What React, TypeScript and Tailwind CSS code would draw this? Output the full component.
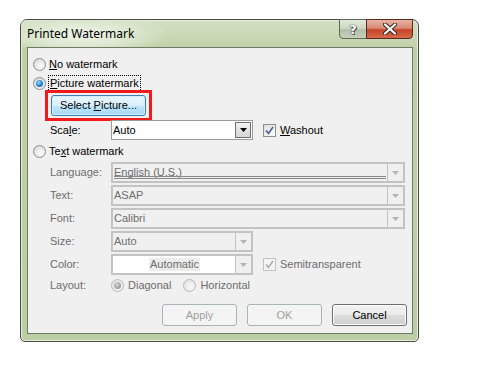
import * as React from "react";

// Windows 7 style "Printed Watermark" dialog

function Radio({ checked = false, disabled = false }: { checked?: boolean; disabled?: boolean }) {
    return (
        <span
            className={
                "relative inline-flex size-[13px] shrink-0 items-center justify-center rounded-full border " +
                (disabled
                    ? "border-[#b8b8b8] bg-[radial-gradient(circle_at_60%_65%,#f8f8f8_0%,#e6e6e6_70%,#dcdcdc_100%)]"
                    : "border-[#8e8f8f] bg-[radial-gradient(circle_at_60%_65%,#ffffff_0%,#e2e2e2_60%,#c9c9c9_100%)]")
            }
        >
            {checked && (
                <span
                    className={
                        "size-[7px] rounded-full " +
                        (disabled
                            ? "bg-[radial-gradient(circle_at_40%_35%,#d6d6d6_0%,#9c9c9c_70%,#8a8a8a_100%)]"
                            : "bg-[radial-gradient(circle_at_40%_35%,#8fd7ff_0%,#1f7ad0_60%,#0d4a96_100%)]")
                    }
                />
            )}
        </span>
    );
}

function Check({ disabled = false }: { disabled?: boolean }) {
    return (
        <span
            className={
                "inline-flex size-[13px] shrink-0 items-center justify-center border " +
                (disabled ? "border-[#c2c2c2] bg-[#f4f4f4]" : "border-[#8f8f8f] bg-gradient-to-br from-[#dcdcdc] to-[#ffffff]")
            }
        >
            <svg width="9" height="9" viewBox="0 0 9 9">
                <path
                    d="M1 4.5 L3.5 7.5 L8 1"
                    fill="none"
                    stroke={disabled ? "#b0b0b0" : "#4b5c96"}
                    strokeWidth="1.6"
                />
            </svg>
        </span>
    );
}

function Arrow({ disabled = false }: { disabled?: boolean }) {
    return (
        <svg width="7" height="4" viewBox="0 0 7 4">
            <path d="M0 0 H7 L3.5 4 Z" fill={disabled ? "#b4b4b4" : "#000"} />
        </svg>
    );
}

function Combo({
    value,
    width,
    disabled = false,
    white = false,
    center = false,
    underline = false,
}: {
    value: string;
    width: string;
    disabled?: boolean;
    white?: boolean;
    center?: boolean;
    underline?: boolean;
}) {
    return (
        <div
            className={
                "relative flex h-full " +
                width +
                " " +
                (disabled ? "border-2 border-[#c3c3c3] " : "border border-[#9c9c9c] ") +
                (white || !disabled ? "bg-white" : "bg-[#f0f0f0]")
            }
        >
            <div
                className={
                    "flex flex-1 items-center pl-[1px] " +
                    (center ? "justify-center " : "") +
                    (disabled ? "text-[#6d6d6d]" : "text-black")
                }
            >
                <span className={center ? "bg-[#ececec] px-[1px]" : ""}>{value}</span>
            </div>
            {underline && (
                <div className="absolute bottom-[2px] left-[1px] right-[17px] flex flex-col gap-[1px]">
                    <div className="h-px bg-[#8a8a8a]" />
                    <div className="h-px bg-[#8a8a8a]" />
                </div>
            )}
            <div
                className={
                    "flex w-[16px] items-center justify-center border-l " +
                    (disabled
                        ? "border-[#c3c3c3] bg-[#f0f0f0]"
                        : "m-[1px] ml-0 border border-[#707070] bg-gradient-to-b from-[#f2f2f2] to-[#d5d5d5]")
                }
            >
                <Arrow disabled={disabled} />
            </div>
        </div>
    );
}

function Label({ children, disabled = false }: { children: React.ReactNode; disabled?: boolean }) {
    return <span className={"w-[61px] shrink-0 " + (disabled ? "text-[#6d6d6d]" : "text-black")}>{children}</span>;
}

function PushButton({ children, disabled = false }: { children: React.ReactNode; disabled?: boolean }) {
    return (
        <button
            className={
                "flex h-[22px] w-[75px] items-center justify-center rounded-[3px] border " +
                (disabled
                    ? "border-[#adb2b5] bg-[#f4f4f4] text-[#a0a0a0]"
                    : "border-[#707070] bg-[linear-gradient(#f2f2f2_0%,#ebebeb_50%,#dddddd_51%,#cfcfcf_100%)] text-black shadow-[inset_0_0_0_1px_#fcfcfc]")
            }
        >
            {children}
        </button>
    );
}

export default function App() {
    return (
        <div className="h-[374px] w-[486px] bg-white pl-[20px] pt-[19px] font-['Liberation_Sans',Arial,sans-serif] text-[11px]">
            <div className="flex h-[323px] w-[399px] flex-col rounded-t-[7px] rounded-b-[5px] border border-[#4a4a4a] bg-[linear-gradient(to_bottom,#d4e0c4_0px,#bfd0a6_30px,#bccea3_100%)] shadow-[inset_0_0_0_1px_#e6eedc]">
                {/* Title bar */}
                <div className="flex h-[27px] shrink-0 items-start justify-between bg-[radial-gradient(ellipse_90px_22px_at_60px_14px,#eef3e8_0%,#dbe6cd_60%,transparent_100%)]">
                    <span className="ml-[6px] mt-[6px] font-['Noto_Sans','Open_Sans',sans-serif] text-[12px] leading-[16px] text-black">
                        Printed Watermark
                    </span>
                    <div className="-mt-px mr-[5px] flex">
                        <div className="flex h-[20px] w-[28px] items-center justify-center rounded-bl-[4px] border border-[#5e6a56] bg-[linear-gradient(#e3e9dc_0%,#cfd8c6_45%,#b3c0a8_55%,#c5d2bb_100%)]">
                            <span className="font-['DejaVu_Sans',sans-serif] text-[13px] font-bold leading-none text-white [text-shadow:0_0_1px_#333,0_0_1px_#333,1px_1px_0_#555]">
                                ?
                            </span>
                        </div>
                        <div className="-ml-px flex h-[20px] w-[47px] items-center justify-center rounded-br-[4px] border border-[#5a2a20] bg-[linear-gradient(#e8b3a4_0%,#d88b74_45%,#c5432a_55%,#d66a48_100%)]">
                            <svg width="14" height="12" viewBox="0 0 14 12">
                                <path d="M2 1.5 L12 10.5 M12 1.5 L2 10.5" stroke="#3a2b28" strokeWidth="4.2" strokeLinecap="round" />
                                <path d="M2 1.5 L12 10.5 M12 1.5 L2 10.5" stroke="#ffffff" strokeWidth="2.2" strokeLinecap="round" />
                            </svg>
                        </div>
                    </div>
                </div>

                {/* Client area */}
                <div className="mb-[7px] ml-[6px] mr-[5px] flex flex-1 flex-col border border-[#6f7b66] bg-[#f0f0f0] pl-[5px] pt-[7px] leading-[13px]">
                    <div className="flex h-[18px] items-center gap-[3px]">
                        <Radio />
                        <span>
                            <u>N</u>o watermark
                        </span>
                    </div>
                    <div className="mt-px flex h-[18px] items-center gap-[2px]">
                        <Radio checked />
                        <span className="border border-dotted border-black px-px py-[1px]">
                            <u>P</u>icture watermark
                        </span>
                    </div>
                    <div className="flex h-[26px] items-center pl-[18px]">
                        <div className="relative">
                            <div className="pointer-events-none absolute -inset-x-[6px] -inset-y-[5px] border-[3px] border-[#f21b1b]" />
                            <div className="flex h-[21px] w-[95px] items-center justify-center rounded-[3px] border border-[#3c7fb1] bg-[linear-gradient(#eaf6fd_0%,#d9f0fc_50%,#bee6fd_51%,#a7d9f5_100%)] text-black shadow-[inset_0_0_0_1px_#d4eefb]">
                                <span>
                                    Select <u>P</u>icture...
                                </span>
                            </div>
                        </div>
                    </div>
                    <div className="mt-[2px] flex h-[20px] items-center pl-[17px]">
                        <Label>
                            Sca<u>l</u>e:
                        </Label>
                        <Combo value="Auto" width="w-[142px]" />
                        <div className="ml-[10px] flex items-center gap-[4px]">
                            <Check />
                            <span>
                                <u>W</u>ashout
                            </span>
                        </div>
                    </div>
                    <div className="mt-[2px] flex h-[18px] items-center gap-[3px]">
                        <Radio />
                        <span>
                            Te<u>x</u>t watermark
                        </span>
                    </div>
                    <div className="mt-[2px] flex h-[21px] items-center pl-[17px]">
                        <Label disabled>Language:</Label>
                        <Combo value="English (U.S.)" width="w-[294px]" disabled underline />
                    </div>
                    <div className="mt-[2px] flex h-[21px] items-center pl-[17px]">
                        <Label disabled>Text:</Label>
                        <Combo value="ASAP" width="w-[294px]" disabled />
                    </div>
                    <div className="mt-[2px] flex h-[21px] items-center pl-[17px]">
                        <Label disabled>Font:</Label>
                        <Combo value="Calibri" width="w-[294px]" disabled />
                    </div>
                    <div className="mt-[2px] flex h-[21px] items-center pl-[17px]">
                        <Label disabled>Size:</Label>
                        <Combo value="Auto" width="w-[142px]" disabled />
                    </div>
                    <div className="mt-[2px] flex h-[21px] items-center pl-[17px]">
                        <Label disabled>Color:</Label>
                        <Combo value="Automatic" width="w-[142px]" disabled white center />
                        <div className="ml-[10px] flex items-center gap-[4px] text-[#6d6d6d]">
                            <Check disabled />
                            <span>Semitransparent</span>
                        </div>
                    </div>
                    <div className="mt-[2px] flex h-[16px] items-center pl-[17px] text-[#6d6d6d]">
                        <Label disabled>Layout:</Label>
                        <div className="flex items-center gap-[4px]">
                            <Radio checked disabled />
                            <span>Diagonal</span>
                        </div>
                        <div className="ml-[12px] flex items-center gap-[4px]">
                            <Radio disabled />
                            <span>Horizontal</span>
                        </div>
                    </div>
                    <div className="mt-[11px] flex justify-end gap-[10px] pr-[5px]">
                        <PushButton disabled>Apply</PushButton>
                        <PushButton disabled>OK</PushButton>
                        <PushButton>Cancel</PushButton>
                    </div>
                </div>
            </div>
        </div>
    );
}
